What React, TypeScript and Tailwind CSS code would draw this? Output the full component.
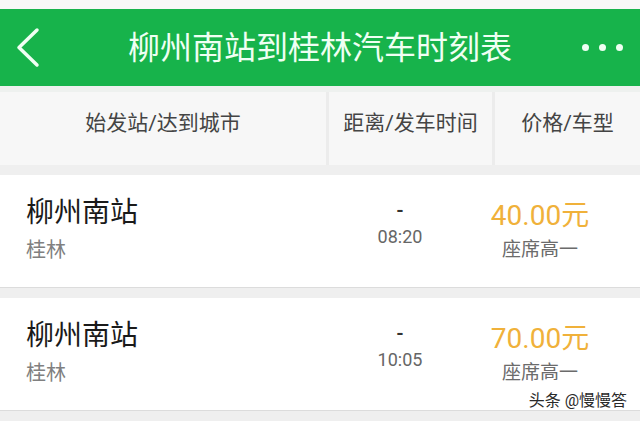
import React from "react";

const rows = [
  { from: "柳州南站", to: "桂林", time: "08:20", price: "40.00元", type: "座席高一" },
  { from: "柳州南站", to: "桂林", time: "10:05", price: "70.00元", type: "座席高一" },
];

const font = { fontFamily: '"Roboto", "Noto Sans CJK SC", sans-serif' };

const TripRow = ({ trip }: { trip: (typeof rows)[number] }) => (
  <div className="flex h-[113px] bg-white border-b border-[#dcdcdc]">
    <div className="w-[330px] pl-[26px] pt-[22px]">
      <div className="text-[28px] leading-[32px] text-[#1a1a1a]">{trip.from}</div>
      <div className="mt-[9px] text-[20px] leading-[24px] text-[#808080]">{trip.to}</div>
    </div>
    <div className="w-[140px] pt-[24px] flex flex-col items-center">
      <div className="text-[19px] leading-[24px] font-bold text-[#333]">-</div>
      <div className="mt-[2px] text-[18px] leading-[24px] text-[#666]">{trip.time}</div>
    </div>
    <div className="w-[140px] pt-[25px] flex flex-col items-center">
      <div className="text-[28px] leading-[32px] text-[#f0b13a]">{trip.price}</div>
      <div className="mt-[6px] text-[19px] leading-[24px] text-[#6b6b6b]">{trip.type}</div>
    </div>
  </div>
);

export default function App() {
  return (
    <div className="relative w-[640px] h-[421px] overflow-hidden bg-[#efefef] flex flex-col" style={font}>
      <div className="h-[9px] bg-[#f7f8f7]" />
      <div className="h-[77px] bg-[#17b34b] flex items-center justify-between text-[#effff3]">
        <svg width="60" height="77" viewBox="0 0 60 77" className="shrink-0">
          <path d="M37 21 L19 38.5 L37 56" fill="none" stroke="#effff3" strokeWidth="3.5" strokeLinecap="round" strokeLinejoin="round" />
        </svg>
        <div className="text-[32px] leading-[40px]">柳州南站到桂林汽车时刻表</div>
        <div className="w-[60px] flex items-center gap-[10px] pr-[17px] justify-end">
          <span className="w-[7px] h-[7px] rounded-full bg-[#effff3]" />
          <span className="w-[7px] h-[7px] rounded-full bg-[#effff3]" />
          <span className="w-[7px] h-[7px] rounded-full bg-[#effff3]" />
        </div>
      </div>
      <div className="h-[6px] bg-[#eef1ef]" />
      <div className="h-[73px] grid grid-cols-[326px_163px_1fr] gap-[3px] bg-[#ececec] text-[21px] text-[#444]">
        <div className="bg-[#f7f7f7] flex justify-center pt-[16px]">始发站/达到城市</div>
        <div className="bg-[#f7f7f7] flex justify-center pt-[16px]">距离/发车时间</div>
        <div className="bg-[#f7f7f7] flex justify-center pt-[16px]">价格/车型</div>
      </div>
      <div className="h-[10px]" />
      <TripRow trip={rows[0]} />
      <div className="h-[10px]" />
      <TripRow trip={rows[1]} />
      <div className="absolute right-[13px] bottom-[10px] text-[16px] leading-[20px] text-[#2a2a2a]">头条 @慢慢答</div>
    </div>
  );
}
